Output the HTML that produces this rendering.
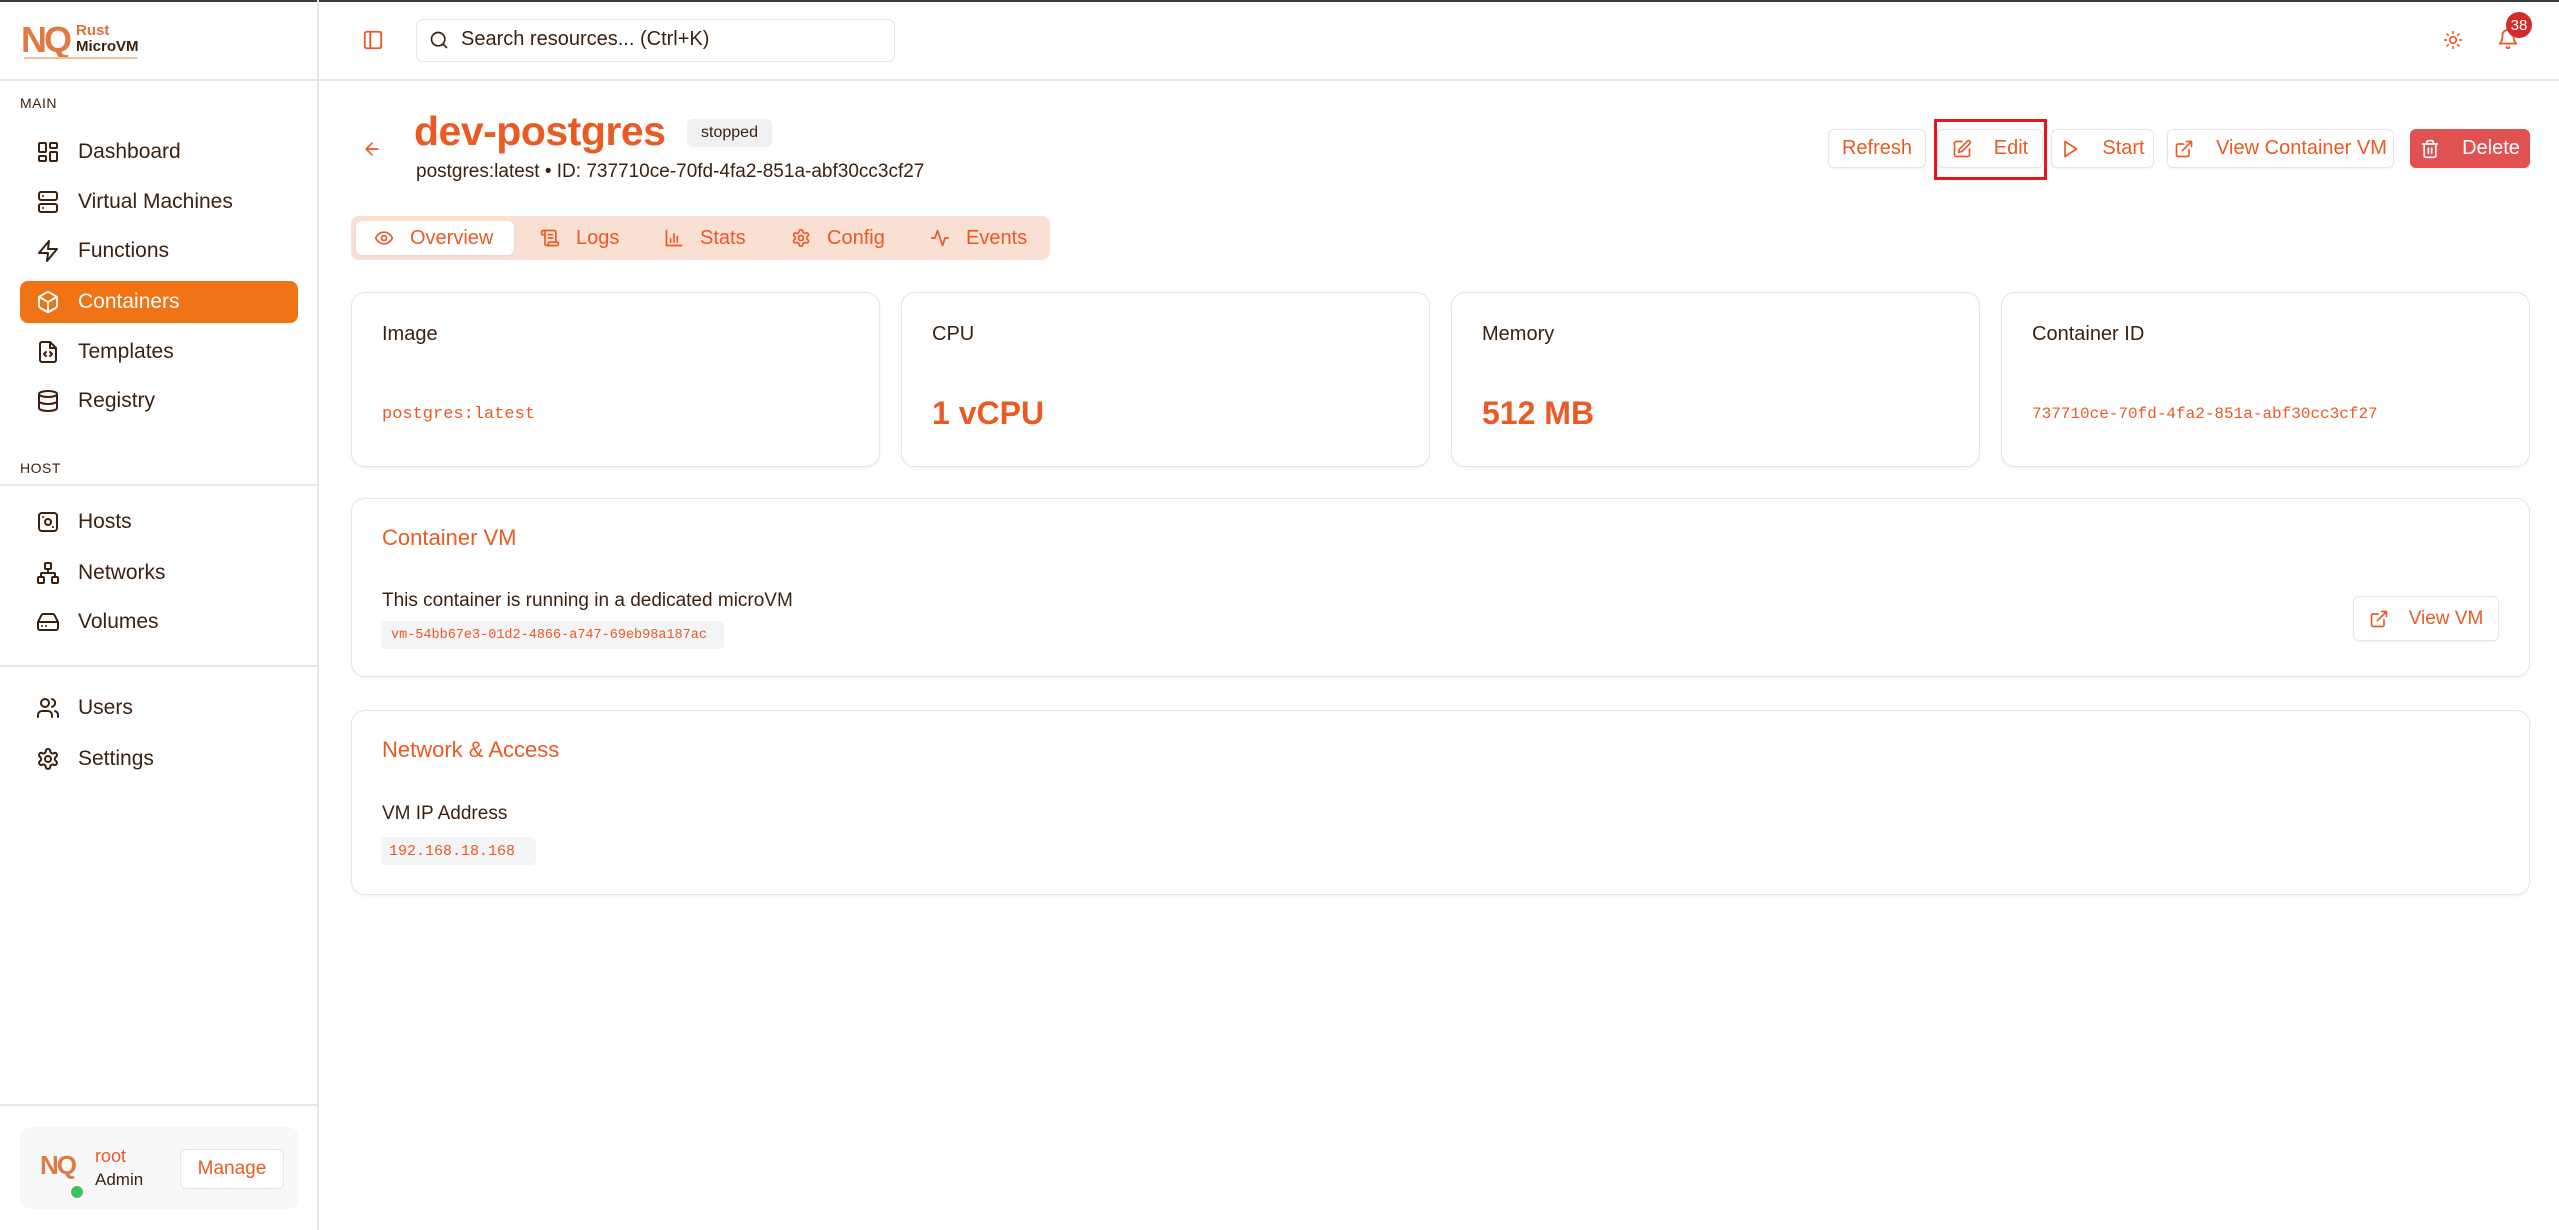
<!DOCTYPE html>
<html><head><meta charset="utf-8"><style>
*{box-sizing:border-box;margin:0;padding:0}
body{width:2559px;height:1230px;position:relative;background:#fff;font-family:"Liberation Sans",sans-serif;color:#3d1f0e;overflow:hidden}
.a{position:absolute}
svg{fill:none;stroke-width:2;stroke-linecap:round;stroke-linejoin:round}
.nav{position:absolute;left:20px;width:278px;height:42px;display:flex;align-items:center;font-size:21px;color:#3d1f0e}
.nav svg{width:24px;height:24px;stroke:#3d1f0e;margin:0 18px 0 16px}
.nav.act{background:#f07316;color:#fff;border-radius:8px}
.nav.act svg{stroke:#fff}
.sec{position:absolute;left:20px;font-size:14px;letter-spacing:.5px}
.hr{position:absolute;left:0;width:318px;height:2px;background:#e5e7eb}
.btn{position:absolute;top:129px;height:39px;border:1px solid #e3e5ea;border-radius:6px;background:#fff;color:#ea5a24;font-size:20px;display:flex;align-items:center;justify-content:center;box-shadow:0 1px 2px rgba(0,0,0,.06)}
.btn svg{width:20px;height:20px;stroke:#ea5a24;margin-right:22px}
.tab{position:absolute;top:221px;height:34px;display:flex;align-items:center;font-size:20px;color:#ea5a24}
.tab svg{width:20px;height:20px;stroke:#ea5a24;margin-right:16px}
.card{position:absolute;border:1px solid #e3e5ea;border-radius:14px;background:#fff;box-shadow:0 1px 3px rgba(0,0,0,.06)}
.lbl{position:absolute;left:30px;top:30px;font-size:20px;color:#3d1f0e}
.val{position:absolute;left:30px;top:102px;font-size:32px;font-weight:bold;color:#ea5a24}
.mono{font-family:"Liberation Mono",monospace;color:#ea5a24}
.ctitle{position:absolute;left:30px;top:26px;font-size:22px;color:#ea5a24}
.chip{position:absolute;background:#f3f4f6;border-radius:5px;font-size:15px;display:flex;align-items:center;padding:0 8px;white-space:nowrap}
</style></head><body>
<div class="a" style="left:0;top:0;width:2559px;height:2px;background:#3a3a3a"></div>
<!-- sidebar -->
<div class="a" style="left:317px;top:0;width:2px;height:1230px;background:#e5e7eb"></div>
<div class="a" style="left:0;top:79px;width:2559px;height:2px;background:#e5e7eb"></div>
<div class="a" style="left:21px;top:20px;font-size:36px;font-weight:bold;color:#e07a45;letter-spacing:-3px;line-height:40px">NQ</div>
<div class="a" style="left:76px;top:23px;font-size:15px;font-weight:bold;color:#e0703a;line-height:16px">Rust</div>
<div class="a" style="left:76px;top:39px;font-size:15px;font-weight:bold;color:#3d1f0e;line-height:16px">MicroVM</div>
<div class="a" style="left:24px;top:57px;width:114px;height:2px;border-radius:2px;background:#f0c0a0"></div>
<div class="sec" style="top:95px">MAIN</div>
<div class="nav" style="top:131px"><svg viewBox="0 0 24 24"><rect x="3" y="3" width="7" height="9" rx="1"/><rect x="14" y="3" width="7" height="5" rx="1"/><rect x="14" y="12" width="7" height="9" rx="1"/><rect x="3" y="16" width="7" height="5" rx="1"/></svg>Dashboard</div>
<div class="nav" style="top:181px"><svg viewBox="0 0 24 24"><rect x="3" y="2" width="18" height="8" rx="2"/><rect x="3" y="14" width="18" height="8" rx="2"/><path d="M7 6h.01M7 18h.01"/></svg>Virtual Machines</div>
<div class="nav" style="top:230px"><svg viewBox="0 0 24 24"><path d="M13 2 3 14h9l-1 8 10-12h-9l1-8z"/></svg>Functions</div>
<div class="nav act" style="top:281px"><svg viewBox="0 0 24 24"><path d="M21 8a2 2 0 0 0-1-1.7l-7-4a2 2 0 0 0-2 0l-7 4A2 2 0 0 0 3 8v8a2 2 0 0 0 1 1.7l7 4a2 2 0 0 0 2 0l7-4a2 2 0 0 0 1-1.7Z"/><path d="M3.3 7 12 12l8.7-5M12 22V12"/></svg>Containers</div>
<div class="nav" style="top:331px"><svg viewBox="0 0 24 24"><path d="M14 2H6a2 2 0 0 0-2 2v16a2 2 0 0 0 2 2h12a2 2 0 0 0 2-2V8z"/><path d="M14 2v6h6M10 12l-2 2 2 2M14 16l2-2-2-2"/></svg>Templates</div>
<div class="nav" style="top:380px"><svg viewBox="0 0 24 24"><ellipse cx="12" cy="5" rx="9" ry="3"/><path d="M3 5v14a9 3 0 0 0 18 0V5M3 12a9 3 0 0 0 18 0"/></svg>Registry</div>
<div class="sec" style="top:460px">HOST</div>
<div class="hr" style="top:484px"></div>
<div class="nav" style="top:501px"><svg viewBox="0 0 24 24"><rect x="3" y="3" width="18" height="18" rx="3"/><circle cx="12" cy="12" r="3"/><path d="M7 7h.01M17 17h.01"/></svg>Hosts</div>
<div class="nav" style="top:552px"><svg viewBox="0 0 24 24"><rect x="16" y="16" width="6" height="6" rx="1"/><rect x="2" y="16" width="6" height="6" rx="1"/><rect x="9" y="2" width="6" height="6" rx="1"/><path d="M5 16v-3a1 1 0 0 1 1-1h12a1 1 0 0 1 1 1v3M12 12V8"/></svg>Networks</div>
<div class="nav" style="top:601px"><svg viewBox="0 0 24 24"><path d="M22 12H2M5.5 5.1 2 12v6a2 2 0 0 0 2 2h16a2 2 0 0 0 2-2v-6l-3.5-6.9A2 2 0 0 0 16.8 4H7.2a2 2 0 0 0-1.7 1.1zM6 16h.01M10 16h.01"/></svg>Volumes</div>
<div class="hr" style="top:665px"></div>
<div class="nav" style="top:687px"><svg viewBox="0 0 24 24"><path d="M16 21v-2a4 4 0 0 0-4-4H6a4 4 0 0 0-4 4v2"/><circle cx="9" cy="7" r="4"/><path d="M22 21v-2a4 4 0 0 0-3-3.9M16 3.1a4 4 0 0 1 0 7.8"/></svg>Users</div>
<div class="nav" style="top:738px"><svg viewBox="0 0 24 24"><path d="M12.2 2h-.4a2 2 0 0 0-2 2v.2a2 2 0 0 1-1 1.7l-.4.3a2 2 0 0 1-2 0l-.2-.1a2 2 0 0 0-2.7.7l-.2.4a2 2 0 0 0 .7 2.7l.2.1a2 2 0 0 1 1 1.7v.5a2 2 0 0 1-1 1.7l-.2.1a2 2 0 0 0-.7 2.7l.2.4a2 2 0 0 0 2.7.7l.2-.1a2 2 0 0 1 2 0l.4.3a2 2 0 0 1 1 1.7v.2a2 2 0 0 0 2 2h.4a2 2 0 0 0 2-2v-.2a2 2 0 0 1 1-1.7l.4-.3a2 2 0 0 1 2 0l.2.1a2 2 0 0 0 2.7-.7l.2-.4a2 2 0 0 0-.7-2.7l-.2-.1a2 2 0 0 1-1-1.7v-.5a2 2 0 0 1 1-1.7l.2-.1a2 2 0 0 0 .7-2.7l-.2-.4a2 2 0 0 0-2.7-.7l-.2.1a2 2 0 0 1-2 0l-.4-.3a2 2 0 0 1-1-1.7V4a2 2 0 0 0-2-2z"/><circle cx="12" cy="12" r="3"/></svg>Settings</div>
<div class="hr" style="top:1104px"></div>
<div class="a" style="left:20px;top:1127px;width:278px;height:82px;background:#f8f8f8;border-radius:10px"></div>
<div class="a" style="left:40px;top:1150px;font-size:26px;font-weight:bold;color:#e07a45;letter-spacing:-2px">NQ</div>
<div class="a" style="left:69px;top:1184px;width:16px;height:16px;border-radius:50%;background:#3fc35a;border:2px solid #fff"></div>
<div class="a" style="left:95px;top:1146px;font-size:18px;color:#ea5a24">root</div>
<div class="a" style="left:95px;top:1170px;font-size:17px">Admin</div>
<div class="a" style="left:180px;top:1149px;width:104px;height:40px;border:1px solid #e3e5ea;border-radius:6px;background:#fff;font-size:19px;color:#ea5a24;display:flex;align-items:center;justify-content:center">Manage</div>
<!-- header -->
<svg class="a" style="left:362px;top:29px;width:22px;height:22px;stroke:#ea5a24" viewBox="0 0 24 24"><rect x="3" y="3" width="18" height="18" rx="2"/><path d="M9 3v18"/></svg>
<div class="a" style="left:416px;top:19px;width:479px;height:43px;border:1px solid #e3e5ea;border-radius:7px"></div>
<svg class="a" style="left:429px;top:30px;width:20px;height:20px;stroke:#3d1f0e" viewBox="0 0 24 24"><circle cx="11" cy="11" r="8"/><path d="m21 21-4.3-4.3"/></svg>
<div class="a" style="left:461px;top:28px;font-size:20px">Search resources... (Ctrl+K)</div>
<svg class="a" style="left:2443px;top:30px;width:20px;height:20px;stroke:#ea5a24" viewBox="0 0 24 24"><circle cx="12" cy="12" r="4"/><path d="M12 2v2M12 20v2M4.9 4.9l1.4 1.4M17.7 17.7l1.4 1.4M2 12h2M20 12h2M6.3 17.7l-1.4 1.4M19.1 4.9l-1.4 1.4"/></svg>
<svg class="a" style="left:2497px;top:28px;width:22px;height:22px;stroke:#ea5a24" viewBox="0 0 24 24"><path d="M6 8a6 6 0 0 1 12 0c0 7 3 9 3 9H3s3-2 3-9M10.3 21a1.9 1.9 0 0 0 3.4 0"/></svg>
<div class="a" style="left:2506px;top:12px;width:26px;height:26px;border-radius:13px;background:#d42a2a;color:#fff;font-size:15px;display:flex;align-items:center;justify-content:center">38</div>
<!-- title -->
<svg class="a" style="left:362px;top:139px;width:20px;height:20px;stroke:#ea5a24" viewBox="0 0 24 24"><path d="m12 19-7-7 7-7M19 12H5"/></svg>
<div class="a" style="left:414px;top:108px;font-size:41px;font-weight:bold;color:#ea5a24;letter-spacing:-0.5px">dev-postgres</div>
<div class="a" style="left:687px;top:119px;width:85px;height:28px;background:#f0f0f2;border-radius:6px;font-size:16px;display:flex;align-items:center;justify-content:center">stopped</div>
<div class="a" style="left:416px;top:161px;font-size:19px">postgres:latest • ID: 737710ce-70fd-4fa2-851a-abf30cc3cf27</div>
<div class="btn" style="left:1828px;width:98px">Refresh</div>
<div class="btn" style="left:1937px;width:106px"><svg viewBox="0 0 24 24"><path d="M12 3H5a2 2 0 0 0-2 2v14a2 2 0 0 0 2 2h14a2 2 0 0 0 2-2v-7"/><path d="M18.4 2.6a2.1 2.1 0 1 1 3 3L12 15l-4 1 1-4Z"/></svg>Edit</div>
<div class="a" style="left:1934px;top:119px;width:113px;height:61px;border:3px solid #e8141b"></div>
<div class="btn" style="left:2051px;width:103px"><svg viewBox="0 0 24 24"><path d="m6 3 14 9-14 9z"/></svg>Start</div>
<div class="btn" style="left:2167px;width:227px"><svg viewBox="0 0 24 24"><path d="M15 3h6v6M10 14 21 3M18 13v6a2 2 0 0 1-2 2H5a2 2 0 0 1-2-2V8a2 2 0 0 1 2-2h6"/></svg>View Container VM</div>
<div class="btn" style="left:2410px;width:120px;background:#e05252;border-color:#e05252;color:#fff"><svg viewBox="0 0 24 24" style="stroke:#fff"><path d="M3 6h18M19 6v14a2 2 0 0 1-2 2H7a2 2 0 0 1-2-2V6M8 6V4a2 2 0 0 1 2-2h4a2 2 0 0 1 2 2v2M10 11v6M14 11v6"/></svg>Delete</div>
<!-- tabs -->
<div class="a" style="left:351px;top:216px;width:699px;height:44px;background:#fadfd3;border-radius:8px"></div>
<div class="a" style="left:356px;top:221px;width:158px;height:34px;background:#fff;border-radius:6px;box-shadow:0 1px 2px rgba(0,0,0,.08)"></div>
<div class="tab" style="left:374px"><svg viewBox="0 0 24 24"><path d="M2 12s3-7 10-7 10 7 10 7-3 7-10 7-10-7-10-7z"/><circle cx="12" cy="12" r="3"/></svg>Overview</div>
<div class="tab" style="left:540px"><svg viewBox="0 0 24 24"><path d="M15 12h-5M15 8h-5M19 17V5a2 2 0 0 0-2-2H4M8 21h12a2 2 0 0 0 2-2v-1a1 1 0 0 0-1-1H11a1 1 0 0 0-1 1v1a2 2 0 1 1-4 0V5a2 2 0 1 0-4 0v2a1 1 0 0 0 1 1h3"/></svg>Logs</div>
<div class="tab" style="left:664px"><svg viewBox="0 0 24 24"><path d="M3 3v18h18M8 17v-4M12 17V7M16 17v-7"/></svg>Stats</div>
<div class="tab" style="left:791px"><svg viewBox="0 0 24 24"><path d="M12.2 2h-.4a2 2 0 0 0-2 2v.2a2 2 0 0 1-1 1.7l-.4.3a2 2 0 0 1-2 0l-.2-.1a2 2 0 0 0-2.7.7l-.2.4a2 2 0 0 0 .7 2.7l.2.1a2 2 0 0 1 1 1.7v.5a2 2 0 0 1-1 1.7l-.2.1a2 2 0 0 0-.7 2.7l.2.4a2 2 0 0 0 2.7.7l.2-.1a2 2 0 0 1 2 0l.4.3a2 2 0 0 1 1 1.7v.2a2 2 0 0 0 2 2h.4a2 2 0 0 0 2-2v-.2a2 2 0 0 1 1-1.7l.4-.3a2 2 0 0 1 2 0l.2.1a2 2 0 0 0 2.7-.7l.2-.4a2 2 0 0 0-.7-2.7l-.2-.1a2 2 0 0 1-1-1.7v-.5a2 2 0 0 1 1-1.7l.2-.1a2 2 0 0 0 .7-2.7l-.2-.4a2 2 0 0 0-2.7-.7l-.2.1a2 2 0 0 1-2 0l-.4-.3a2 2 0 0 1-1-1.7V4a2 2 0 0 0-2-2z"/><circle cx="12" cy="12" r="3"/></svg>Config</div>
<div class="tab" style="left:930px"><svg viewBox="0 0 24 24"><path d="M22 12h-4l-3 9L9 3l-3 9H2"/></svg>Events</div>
<!-- stat cards -->
<div class="card" style="left:351px;top:292px;width:529px;height:175px"><div class="lbl">Image</div><div class="a mono" style="left:30px;top:112px;font-size:17px">postgres:latest</div></div>
<div class="card" style="left:901px;top:292px;width:529px;height:175px"><div class="lbl">CPU</div><div class="val">1 vCPU</div></div>
<div class="card" style="left:1451px;top:292px;width:529px;height:175px"><div class="lbl">Memory</div><div class="val">512 MB</div></div>
<div class="card" style="left:2001px;top:292px;width:529px;height:175px"><div class="lbl">Container ID</div><div class="a mono" style="left:30px;top:112px;font-size:16px">737710ce-70fd-4fa2-851a-abf30cc3cf27</div></div>
<!-- container vm -->
<div class="card" style="left:351px;top:498px;width:2179px;height:179px">
<div class="ctitle">Container VM</div>
<div class="a" style="left:30px;top:91px;font-size:19px">This container is running in a dedicated microVM</div>
<div class="chip mono" style="left:29px;top:122px;height:28px;width:343px;font-size:13.5px;padding:0 10px">vm-54bb67e3-01d2-4866-a747-69eb98a187ac</div>
<div class="a" style="left:2001px;top:97px;width:146px;height:45px;border:1px solid #e3e5ea;border-radius:6px;display:flex;align-items:center;justify-content:center;font-size:19px;color:#ea5a24;box-shadow:0 1px 2px rgba(0,0,0,.06)"><svg viewBox="0 0 24 24" style="width:20px;height:20px;stroke:#ea5a24;margin-right:20px"><path d="M15 3h6v6M10 14 21 3M18 13v6a2 2 0 0 1-2 2H5a2 2 0 0 1-2-2V8a2 2 0 0 1 2-2h6"/></svg>View VM</div>
</div>
<!-- network -->
<div class="card" style="left:351px;top:710px;width:2179px;height:185px">
<div class="ctitle">Network &amp; Access</div>
<div class="a" style="left:30px;top:92px;font-size:19px">VM IP Address</div>
<div class="chip mono" style="left:29px;top:126px;height:28px;width:155px;font-size:15px">192.168.18.168</div>
</div>
</body></html>
